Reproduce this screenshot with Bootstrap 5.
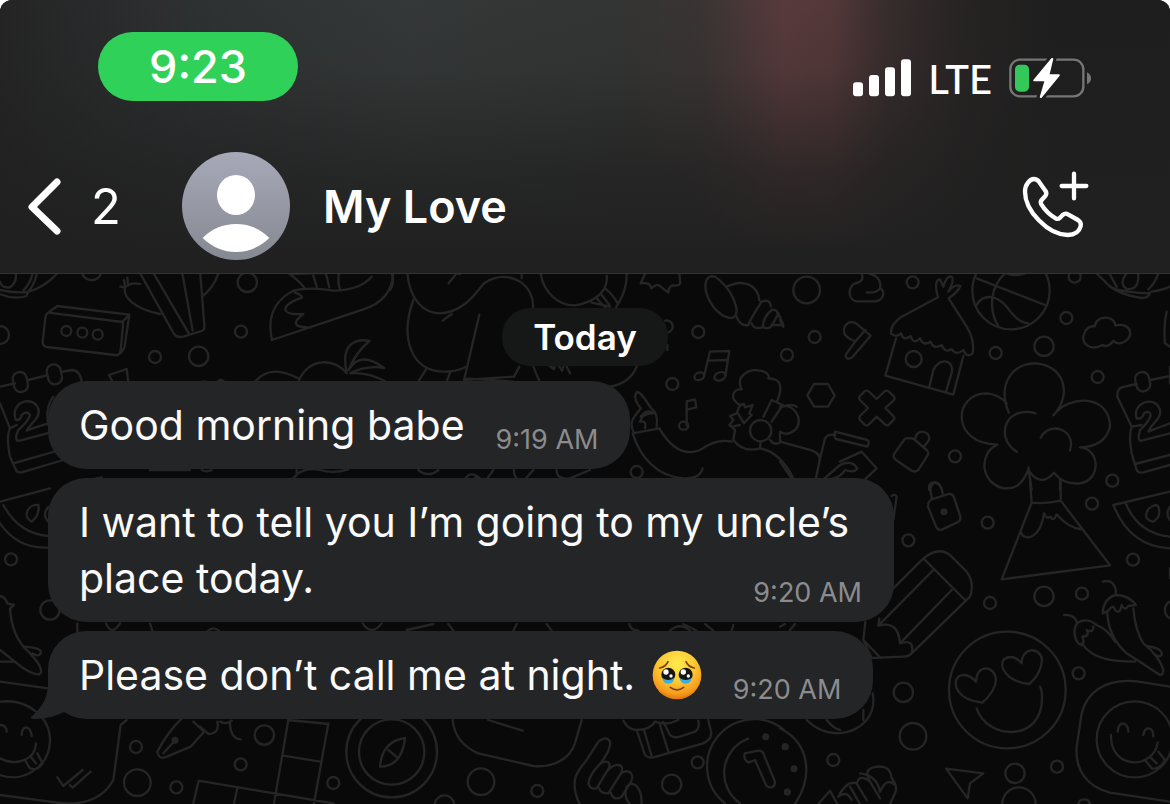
<!DOCTYPE html>
<html lang="en" data-bs-theme="dark">
<head>
<meta charset="utf-8">
<meta name="viewport" content="width=device-width, initial-scale=1">
<title>My Love</title>
<link href="https://cdn.jsdelivr.net/npm/bootstrap@5.3.0/dist/css/bootstrap.min.css" rel="stylesheet">
<style>
  html { background: #fff; }
  body { font-family: Inter, "Liberation Sans", sans-serif; background: #fff; color: #fff; }
  .phone { background: #090909; border-radius: 12px 12px 0 0; overflow: hidden; }
  .topbar {
    padding: 32px 79px 13px 28px;
    border-bottom: 1px solid #323232;
    background:
      linear-gradient(to bottom, rgba(32, 32, 32, 0), rgba(32, 32, 32, .12) 25%, rgba(32, 32, 32, .7) 62%, #202020 95%),
      linear-gradient(to right, #242424, #2e3132 17%, #353838 35%, #333434 52%, #3a3433 60%, #583a3c 67%, #543839 71%, #372c2c 76%, #272423 82%, #1e1e1e 90%);
  }
  .status-row { padding-left: 70px; }
  .clock-pill { width: 200px; height: 69px; border-radius: 35px; background: #30d158; font-size: 45px; line-height: 70px; font-weight: 500; }
  .carrier { font-family: "Liberation Sans Narrow", Lato, sans-serif; font-size: 40px; line-height: 42px; font-weight: 500; padding-top: 3px; }
  .signals { gap: 17px; padding-top: 23px; }
  .chat-row { padding-top: 51px; }
  .back-link { gap: 29px; width: 154px; font-size: 49px; line-height: 56px; }
  .back-link span, .contact { padding-top: 2px; }
  .contact { font-size: 45px; line-height: 56px; font-weight: 600; margin-left: 33px; }
  .chat { padding: 34px 48px 84px; min-height: calc(100vh - 274px); isolation: isolate; }
  .wallpaper { z-index: -1; }
  .day { padding: 0 31px; margin-bottom: 15px; border-radius: 28px; background: #161717; font-size: 35px; line-height: 58px; font-weight: 600; }
  .thread { gap: 9px; }
  .bubble { padding: 16px 32px 16px 31px; border-radius: 38px; background: #242527; font-size: 41px; line-height: 56px; color: #fafafa; max-width: 846px; column-gap: 31px; }
  .bubble time { font-size: 27px; line-height: 32px; color: #8b8c8e; margin-bottom: -3px; }
  .bubble.tight time { margin-left: -139px; }
  .emoji { margin: -8px 0 0 5px; }
  .tail { left: -17px; bottom: 0; }
</style>
</head>
<body>
<div class="phone min-vh-100 d-flex flex-column">
  <header class="topbar">
    <div class="status-row d-flex align-items-start justify-content-between">
      <div class="clock-pill text-center">9:23</div>
      <div class="signals d-flex align-items-center">
        <svg width="58" height="38" viewBox="0 0 174 114" fill="#fff" aria-label="Signal">
          <rect y="70" width="30" height="42" rx="9"/><rect x="48" y="48" width="30" height="64" rx="9"/><rect x="96" y="25" width="30" height="87" rx="9"/><rect x="144" y="1" width="30" height="111" rx="9"/>
        </svg>
        <span class="carrier">LTE</span>
        <svg width="82" height="42" viewBox="627 169 246 126" aria-label="Battery charging">
          <rect x="631" y="177" width="219" height="110" rx="29" fill="none" stroke="#777676" stroke-width="7"/>
          <rect x="645" y="192" width="42" height="81" rx="14" fill="#34c759"/>
          <path d="M861 215q12 6 12 18t-12 18z" fill="#777676"/>
          <path d="M754 173 700 238q-2 4 3 4h30l-14 48q2 4 6 1l54-66q2-4-3-4h-27l11-47q-2-4-6-1z" fill="#fff" stroke="#201f1f" stroke-width="18" paint-order="stroke"/>
        </svg>
      </div>
    </div>
    <nav class="chat-row d-flex align-items-center">
      <a href="#" class="back-link d-flex align-items-center text-white text-decoration-none" aria-label="Back, 2 unread">
        <svg width="34" height="58" viewBox="0 0 34 58" fill="none" stroke="#fff" stroke-width="7" stroke-linecap="round" stroke-linejoin="round"><path d="M29 5 4 30l25 24"/></svg>
        <span>2</span>
      </a>
      <svg width="108" height="108" viewBox="0 0 324 324" aria-hidden="true">
        <defs><linearGradient id="av" x2="0" y2="1"><stop stop-color="#a7a9b8"/><stop offset="1" stop-color="#858991"/></linearGradient></defs>
        <circle cx="162" cy="162" r="162" fill="url(#av)"/>
        <ellipse cx="162" cy="129" rx="57" ry="60" fill="#fff"/>
        <path d="M62 258Q103 216 162 216t100 42Q218 300 162 300T62 258z" fill="#fff"/>
      </svg>
      <span class="contact">My Love</span>
      <button type="button" class="btn border-0 p-0 ms-auto lh-1 text-white" aria-label="Add call">
        <svg width="72" height="72" viewBox="657 510 216 216" fill="none" stroke="#fff" stroke-width="13" stroke-linecap="round" stroke-linejoin="round">
          <path d="M675 575C675 553 690 537 702 537Q711 537 717 545L736 572Q742 580 736 588L725 600Q720 606 724 613Q740 639 767 655Q774 659 780 653L788 645Q796 638 804 643L834 660Q845 667 842 679Q835 705 803 705C745 705 675 633 675 575z"/>
          <path d="M822 521v74M785 558h74"/>
        </svg>
      </button>
    </nav>
  </header>

  <main class="chat position-relative flex-grow-1">
    <svg class="wallpaper position-absolute top-0 start-0 w-100 h-100" viewBox="0 274 1170 530" preserveAspectRatio="xMidYMin slice" fill="none" stroke="#252526" stroke-width="7" stroke-linecap="round" stroke-linejoin="round" aria-hidden="true">
      <!-- upper left: fruit bowl, carrots, remote, fox tail, calendar, island -->
      <g transform="translate(0 270) scale(.33333)">
        <path d="M0 60Q50 70 84 66L80 78Q40 90 0 72M84 66Q140 50 180 0M100 0Q95 35 70 62M45 0Q55 35 30 52Q5 55 0 35M112 0Q108 38 84 66"/>
        <path d="M245 0a30 30 0 0 0 59 8M0 168a27 27 0 0 1 0 54"/>
        <circle cx="742" cy="37" r="29"/><circle cx="723" cy="185" r="18"/><circle cx="465" cy="261" r="18"/><circle cx="596" cy="259" r="29"/>
        <path d="M415 0 522 192Q530 204 550 200L605 183Q615 180 613 165L600 0M455 0 565 188M545 0 578 182M480 132C400 115 368 80 375 52L361 50M375 52L372 30M384 46L382 22M375 52Q395 35 420 42M606 80Q640 55 655 10"/>
        <path d="M145 128 172 108 388 134Q375 148 367 156L145 128Q138 130 136 145L128 215Q127 228 140 231L345 255Q360 257 362 240L369 165Q370 156 362 154M388 134 374 228Q370 246 352 256"/>
        <circle cx="199" cy="183" r="15"/><circle cx="247" cy="188" r="15"/><circle cx="293" cy="194" r="15"/>
        <path d="M816 210C800 140 825 90 880 62Q930 50 1000 62Q1080 60 1115 20M816 210 1090 118Q1180 90 1180 0M885 68Q905 75 906 83Q855 100 856 120Q860 135 910 132Q880 155 890 165Q900 173 935 172M860 5Q900 35 912 52M870 12 995 8M935 0 950 50M975 0 988 52M1020 0Q1010 30 1020 58"/>
        <path d="M0 350 45 340M85 330 140 316M188 305 215 300Q240 300 245 335M0 400 30 475M30 475Q18 500 30 560L48 600Q50 608 65 607L190 570M40 580 180 540M30 475 50 465"/>
        <rect x="40" y="306" width="42" height="60" rx="20" transform="rotate(-12 61 336)"/><rect x="142" y="283" width="42" height="60" rx="20" transform="rotate(-12 163 312)"/>
        <path d="M48 450C28 400 90 375 112 410C128 440 95 455 80 482Q110 470 145 460M48 450Q62 452 65 435Q82 420 90 435Q88 450 55 480Q40 515 60 512L150 488M160 380Q130 420 150 480"/>
        <path d="M327 315 380 297 386 345M327 315 340 340M765 335Q810 280 895 325M897 330C930 260 1005 265 1040 310M1040 305C1020 220 1070 205 1108 213Q1065 250 1046 300Q1080 240 1152 294Q1100 285 1050 310Q1110 305 1165 340M600 338Q612 330 625 338M650 338Q662 322 675 338M450 600H570M605 600Q620 608 635 600M890 600V615L875 628M890 612Q925 590 960 600Q1000 612 1045 598"/>
      </g>
      <!-- upper middle: characters, shell, notes, woman with headphones -->
      <g transform="translate(390 270) scale(.33333)">
        <path d="M52 10C60 90 100 130 150 130C230 125 260 60 285 38C360 -10 440 50 428 120M70 90C30 200 60 305 165 305Q200 305 228 290M158 152 185 132M176 40 200 10M210 12H205M268 134 222 330 372 320 388 290M225 325 370 335M108 298 85 335M180 308 170 335M5 10Q15 40 0 60M395 10V25M430 290Q440 315 448 333M740 290Q720 340 660 350"/>
        <path d="M452 10C460 70 510 108 555 106C620 95 655 60 650 18M710 10Q712 60 678 112M605 98 660 110M620 85 650 118M645 55Q670 75 683 100M635 75 658 104M480 288l12 10 2-10M508 290l8 12 4-12M530 290l10 20M765 12 752 40Q780 35 784 55Q800 38 812 50L835 68Q836 48 850 46Q875 50 870 30L868 10"/>
        <path d="M975 20C940 10 940 60 960 95C985 140 1040 165 1040 120Q1030 60 975 20zM1010 50C1060 25 1105 45 1108 92M1040 140Q1050 170 1075 165Q1085 140 1115 95Q1140 85 1143 110M1085 160Q1090 180 1118 172Q1120 140 1145 120Q1165 115 1162 140M1118 170Q1135 180 1145 168L1160 140M1165 130 1180 165 1145 165"/>
        <circle cx="925" cy="186" r="18"/><circle cx="847" cy="342" r="18"/><circle cx="740" cy="606" r="18"/><path d="M825 152a18 18 0 0 1 10 35M832 225v15"/>
        <path d="M942 318 960 245 1018 243 1006 318M957 272 1010 270M890 466V394L915 388 919 412 894 418M1026 470 1050 465"/><ellipse cx="928" cy="319" rx="15" ry="11" transform="rotate(-20 928 319)"/><ellipse cx="990" cy="319" rx="17" ry="12" transform="rotate(-20 990 319)"/><ellipse cx="881" cy="467" rx="14" ry="12"/>
        <path d="M728 490 808 475M730 485C715 450 735 440 752 415Q725 380 742 366C760 370 770 400 785 416Q805 430 800 470M752 440Q770 415 790 430Q755 430 750 455Q770 450 765 475M808 475C840 530 880 560 930 540Q980 505 1025 515M728 490C750 560 800 620 880 625Q930 628 938 595"/>
        <path d="M1050 405C1015 385 1030 355 1055 358C1035 320 1075 295 1110 302C1135 305 1138 320 1135 325C1180 325 1175 360 1162 392M1050 405 1062 402 1065 412 1088 405 1078 430 1085 435 1062 460 1045 432M1050 405 1040 430 1020 438 1030 450 1018 465 1035 480 1030 510Q1060 550 1110 535L1112 515M1120 440 1145 390 1178 405 1145 455M1178 410Q1205 400 1220 410M1110 535Q1170 545 1210 625M1140 510Q1155 530 1175 515"/><circle cx="1112" cy="482" r="32"/>
        <path d="M85 600Q115 625 145 600M225 628Q240 600 270 625M250 628Q265 615 270 628M310 600 290 628M372 600Q370 620 385 628M430 600 405 628M500 600Q500 630 540 625L600 600"/>
      </g>
      <!-- upper right: hut, ball, cloud, tree, padlock -->
      <g transform="translate(780 270) scale(.33333)">
        <circle cx="80" cy="60" r="40"/><circle cx="398" cy="37" r="18"/><circle cx="104" cy="201" r="18"/><circle cx="21" cy="255" r="18"/><circle cx="647" cy="249" r="18"/><circle cx="792" cy="229" r="29"/><circle cx="859" cy="144" r="18"/><circle cx="953" cy="321" r="18"/><circle cx="525" cy="559" r="18"/><circle cx="997" cy="632" r="18"/><circle cx="884" cy="20" r="18"/>
        <path d="M245 10Q255 35 225 40C200 55 205 95 235 94H285C315 90 315 60 300 55C305 30 290 15 265 10M300 55Q290 70 260 67M0 150 10 170"/>
        <path d="M228 212 200 250Q192 262 205 267L217 262 272 197 228 160C200 145 180 180 200 200Q220 215 228 212L256 180"/>
        <path d="M474 82 365 140Q330 165 333 190Q350 205 363 190Q370 215 392 198Q400 225 420 205Q430 230 452 215Q460 240 485 225Q495 250 515 238Q530 258 550 240Q560 265 578 250Q585 210 560 170L506 85M474 82Q460 30 480 28L490 50Q500 15 515 20Q525 30 505 65Q525 40 541 48Q535 65 506 85M348 205 316 317 520 374 550 258M448 350 460 300C475 265 520 265 516 305L498 365"/><circle cx="401" cy="267" r="24"/>
        <circle cx="693" cy="62" r="116"/><path d="M590 25 795 105M675 10C630 50 625 120 655 168M590 105C610 70 650 75 680 110Q715 160 745 160M680 10Q700 20 735 10"/>
        <path d="M950 10Q980 40 985 45Q1000 65 1105 70L1110 68Q1105 85 1085 84Q1020 75 985 45M1115 65Q1150 60 1170 50M1135 10Q1125 40 1105 58M1040 10Q1015 40 1040 57Q1080 60 1074 10M988 10 1010 50M1160 125Q1150 165 1155 220L1170 230"/>
        <path d="M945 168C945 140 1000 130 1006 166C1060 155 1065 210 1020 220Q1005 220 1000 212Q985 235 968 225C930 245 900 220 913 190Q920 168 945 168z"/>
        <path d="M102 342h42l20 34-20 34h-42L82 376z"/><path d="M265 363 290 387 315 363Q322 360 328 366L342 380Q346 386 340 392L316 414 340 438Q346 444 340 450L327 464Q321 468 315 463L290 440 265 465Q259 468 254 464L240 450Q236 444 240 438L264 414 240 390Q235 384 240 378L253 365Q259 360 265 363z"/>
        <path d="M686 428C650 340 700 280 766 280C850 285 880 370 820 436C870 370 990 375 990 470Q975 530 900 532C960 535 965 630 900 640Q850 645 822 608Q780 655 745 600C720 660 690 655 672 655C600 640 595 550 652 524C510 520 520 370 620 370Q655 372 680 400M766 430C680 405 640 500 711 546M782 503C810 450 890 480 870 541M745 592 755 660M840 625V660"/>
        <path d="M385 505Q395 502 405 510L440 540Q450 550 440 560L415 600Q405 608 395 602L348 570Q335 560 345 548L372 510Q378 503 385 505M405 508C410 470 455 485 447 510L432 530"/>
        <path d="M0 410C40 395 75 450 45 480Q20 500 0 485V515L90 540Q125 550 118 575L108 625M0 575 35 625M118 575 135 505Q145 490 165 495M165 485 262 510Q270 515 262 530L168 507Q160 500 165 485zM180 575 245 545 290 595 255 628M130 628 180 585Q215 568 232 595Q225 610 195 600Q185 620 150 628"/>
        <path d="M448 660C440 630 480 630 486 660M1170 318 1112 330M1070 342 1025 352Q1010 360 1012 380L1055 470Q1045 500 1055 550L1070 600Q1075 610 1090 607L1170 585M1065 582 1170 555M1055 470 1085 465M1170 290V340"/><rect x="1067" y="306" width="42" height="58" rx="20" transform="rotate(-12 1088 335)"/>
        <path d="M1070 445C1055 400 1120 375 1138 415C1150 440 1120 455 1105 485Q1130 475 1170 460M1070 445Q1085 450 1092 430Q1110 420 1112 435Q1108 455 1080 480Q1070 515 1085 512L1170 490"/>
      </g>
      <!-- lower right: volcano, pencil, heart eyes, chillies, tongue face -->
      <g transform="translate(780 480) scale(.33333)">
        <circle cx="385" cy="181" r="18"/><circle cx="623" cy="128" r="18"/><circle cx="630" cy="369" r="18"/><circle cx="936" cy="71" r="18"/><circle cx="1059" cy="239" r="18"/><circle cx="906" cy="341" r="18"/><circle cx="792" cy="349" r="29"/><circle cx="896" cy="580" r="18"/><circle cx="370" cy="637" r="29"/><circle cx="399" cy="769" r="40"/><circle cx="160" cy="840" r="18"/><circle cx="705" cy="880" r="29"/><circle cx="831" cy="860" r="18"/><path d="M667 972a50 50 0 0 1 100 0M895 972a18 18 0 0 1 35 0M1170 365a28 28 0 0 0 0 50M1170 265v30"/>
        <path d="M455 52C440 0 480 -10 488 40M455 58 505 42Q517 40 522 52L541 110Q543 122 532 127L485 149Q473 152 468 140L444 80Q443 65 455 58"/><circle cx="492" cy="95" r="7" fill="#252526"/>
        <path d="M755 68 665 298 990 256 842 62Q800 72 755 68L750 0M842 62V0M722 155C730 185 780 180 792 100Q800 120 812 110Q820 128 830 103Q865 145 905 148"/>
        <path d="M1170 35 1000 75Q1050 200 1170 205M1038 72Q1075 160 1170 170M1130 75C1095 80 1085 120 1120 125Q1145 110 1135 80zM1170 80Q1155 100 1170 120"/>
        <path d="M430 235Q480 195 515 230L560 275Q585 310 570 350L395 520Q385 530 370 530L275 534 250 480 256 425M430 235 295 370M430 235 555 360M460 270 295 437Q355 420 360 490Q405 475 395 520M515 330 360 490M295 437 298 415M250 480 300 532M340 120 350 50Q345 40 335 48M0 440 15 432M30 450 45 432"/>
        <circle cx="682" cy="630" r="175"/><path d="M590 685C620 780 790 790 786 650Q786 630 780 620M607 668C530 660 515 610 535 590Q560 575 588 605C590 550 645 555 648 600Q645 635 607 668zM748 612C680 605 655 560 672 538Q700 520 725 550C725 500 780 500 786 538Q785 580 748 612z"/>
        <path d="M968 305C1000 295 1010 325 1007 345M1007 345Q970 355 968 400L985 392Q1000 370 1005 390Q1020 405 1025 375Q1035 395 1045 378L1068 375Q1045 345 1007 345M982 400Q985 470 1040 520L1140 585Q1150 585 1150 570Q1140 530 1090 490Q1065 450 1060 385M1100 498Q1150 505 1145 525Q1135 535 1120 520M852 405Q885 403 892 430M892 430C875 450 885 490 905 495Q915 490 907 470Q930 470 920 450Q940 460 940 440M890 430Q920 410 950 435Q985 450 1005 485M905 490C940 540 1000 545 1065 545"/>
        <path d="M1170 620 1070 604C970 595 920 640 905 700L890 800C885 870 920 920 990 938L1170 965"/><circle cx="1064" cy="778" r="114"/><path d="M993 765C990 870 1120 870 1133 788M1013 755C1015 720 1045 725 1045 755M1090 765C1095 735 1120 740 1120 770M1095 840 1115 865Q1140 870 1155 840L1135 815M1112 833 1130 850"/>
        <path d="M498 866 610 880 570 910 563 955z M80 720Q120 760 175 760C250 755 290 700 278 640M140 720Q160 745 180 750M250 690V720M0 745C90 790 100 890 45 972M115 972 150 932 172 972M175 950Q200 930 215 960M175 950Q200 900 230 910Q240 880 270 905Q250 870 280 862Q330 850 335 895Q355 920 345 940L330 972M230 910 260 960M270 905 300 955M240 880Q290 885 300 935M210 920 240 972M300 935Q320 890 345 915"/><g fill="#252526"><circle cx="15" cy="800" r="7"/><circle cx="42" cy="866" r="7"/><circle cx="22" cy="936" r="7"/></g>
      </g>
      <!-- lower left: melon, chilli, phone, pen nib, blocks, compass -->
      <g transform="translate(0 470) scale(.33333)">
        <path d="M0 95 150 55M10 105Q55 190 145 198M0 160Q55 240 150 232M305 22 200 45M115 105C85 100 65 140 95 155Q120 135 115 105zM145 110Q125 135 145 155M0 378Q15 380 22 400L42 405 30 415Q35 500 85 545Q130 590 122 610Q110 620 70 595L0 540M75 530Q130 535 122 550Q115 562 98 550M0 575H45M0 635 145 655M232 460V485"/>
        <circle cx="33" cy="268" r="18"/><circle cx="150" cy="420" r="29"/><circle cx="408" cy="831" r="18"/><circle cx="412" cy="938" r="40"/><circle cx="529" cy="952" r="18"/><circle cx="722" cy="883" r="18"/><circle cx="793" cy="795" r="29"/><circle cx="1000" cy="939" r="18"/>
        <path d="M0 695C80 685 150 740 150 810C150 890 70 940 0 915M0 765Q20 765 20 785M65 795C65 760 95 770 95 798M0 865C50 890 105 870 108 820M75 870 90 895Q110 905 128 880L112 850M92 860 108 880M0 975 150 995Q290 1020 340 930L362 765 380 750M172 922 190 948 248 900M210 945 218 953 272 905"/>
        <path d="M545 745Q500 790 472 845Q475 868 495 862L572 830 612 785 580 755M490 850 522 815M600 770 625 792Q660 790 652 755M690 755Q690 805 722 808M660 755Q680 765 695 752"/><circle cx="525" cy="811" r="7" fill="#252526"/>
        <path d="M865 750 822 1000M985 760 942 1000M865 750 985 762M850 857 960 875M580 1000 596 932 1000 1000M712 955 702 1000M318 460Q335 500 360 460M450 460 458 485M622 485Q640 465 660 485M1088 460Q1115 500 1145 460"/>
      </g>
      <!-- lower middle: compass, hand, gift, coin -->
      <g transform="translate(390 620) scale(.33333)">
        <circle cx="5" cy="396" r="136"/><circle cx="5" cy="396" r="98"/><path d="M45 354Q-25 365 -30 440Q35 440 45 354zM-5 390 25 415"/>
        <path d="M188 300Q195 370 265 400L430 438C510 445 545 400 555 370L575 300M295 300 398 332M568 550C535 480 565 450 590 420L625 365Q650 345 660 365Q665 385 632 430M632 430C660 415 665 435 650 455L620 505Q600 510 595 490Q600 460 632 430M650 455C680 420 710 435 690 465L655 520Q630 520 628 505M690 465C710 440 740 460 720 490L695 530Q670 545 662 518M710 500C735 475 755 510 755 550M710 500Q700 530 718 550"/>
        <path d="M700 302Q715 330 740 330L765 405Q775 415 790 412L940 370Q970 355 962 330L955 300M740 330Q780 330 795 305M762 330 785 408M810 315 835 395M820 305 840 345Q850 355 870 350L915 335Q930 325 925 302M795 305Q830 318 865 300M50 30 130 12M175 12 190 32M380 12 370 32M470 12 485 32M718 12Q720 30 745 32M840 32Q870 5 900 32M880 12 920 32M945 12 970 32M1030 15 1025 32"/>
        <circle cx="273" cy="485" r="40"/><circle cx="442" cy="513" r="18"/><circle cx="923" cy="427" r="18"/><circle cx="845" cy="493" r="29"/><path d="M135 550a29 29 0 0 1 57 0M1005 550A136 136 0 0 1 1180 328M1050 550A110 110 0 0 1 1075 356M1065 400 1105 392Q1115 390 1120 400L1155 485Q1155 502 1140 502Q1132 502 1128 495L1095 420 1075 428Q1058 415 1065 400z"/><g fill="#252526"><circle cx="1127" cy="350" r="7"/><circle cx="1186" cy="380" r="7"/><circle cx="1192" cy="516" r="7"/></g>
      </g>
    </svg>

    <div class="d-flex justify-content-center"><div class="day">Today</div></div>
    <div class="thread d-flex flex-column align-items-start">
      <article class="bubble d-flex align-items-end">
        <p class="mb-0">Good morning babe</p><time class="text-nowrap">9:19 AM</time>
      </article>
      <article class="bubble tight d-flex align-items-end">
        <p class="mb-0">I want to tell you I’m going to my uncle’s place today.</p><time class="text-nowrap">9:20 AM</time>
      </article>
      <article class="bubble d-flex align-items-end position-relative">
        <svg class="tail position-absolute" width="60" height="50" viewBox="0 0 60 50" fill="#242527" aria-hidden="true"><path d="M17 0V15Q17 34 0 48Q-1 50 4 50Q20 50 33 43L60 50V0z"/></svg>
        <p class="mb-0 position-relative">Please don’t call me at night.
          <svg class="emoji" width="50" height="50" viewBox="0 0 150 150" role="img" aria-label="face holding back tears">
            <defs><radialGradient id="face" cx=".5" cy=".28" r=".72"><stop stop-color="#ffec4f"/><stop offset=".5" stop-color="#fdc934"/><stop offset=".85" stop-color="#f79a1b"/><stop offset="1" stop-color="#dd760b"/></radialGradient></defs>
            <circle cx="75" cy="75" r="73" fill="url(#face)"/>
            <g fill="none" stroke="#7c4205" stroke-width="5" stroke-linecap="round"><path d="M23 54Q42 50 48 35M127 54Q108 50 102 35"/><path d="M55 112Q75 127 95 112"/></g>
            <circle cx="49" cy="74" r="21" fill="#171514"/><circle cx="101" cy="74" r="21" fill="#171514"/>
            <path d="M31 84Q49 96 67 84Q65 101 49 101T31 84zM83 84Q101 96 119 84Q117 101 101 101T83 84z" fill="#38afe2"/>
            <g fill="#fff"><circle cx="42" cy="66" r="8"/><circle cx="57" cy="78" r="5"/><circle cx="94" cy="66" r="8"/><circle cx="109" cy="78" r="5"/></g>
          </svg></p><time class="text-nowrap">9:20 AM</time>
      </article>
    </div>
  </main>
</div>
<script src="https://cdn.jsdelivr.net/npm/bootstrap@5.3.0/dist/js/bootstrap.bundle.min.js"></script>
</body>
</html>
